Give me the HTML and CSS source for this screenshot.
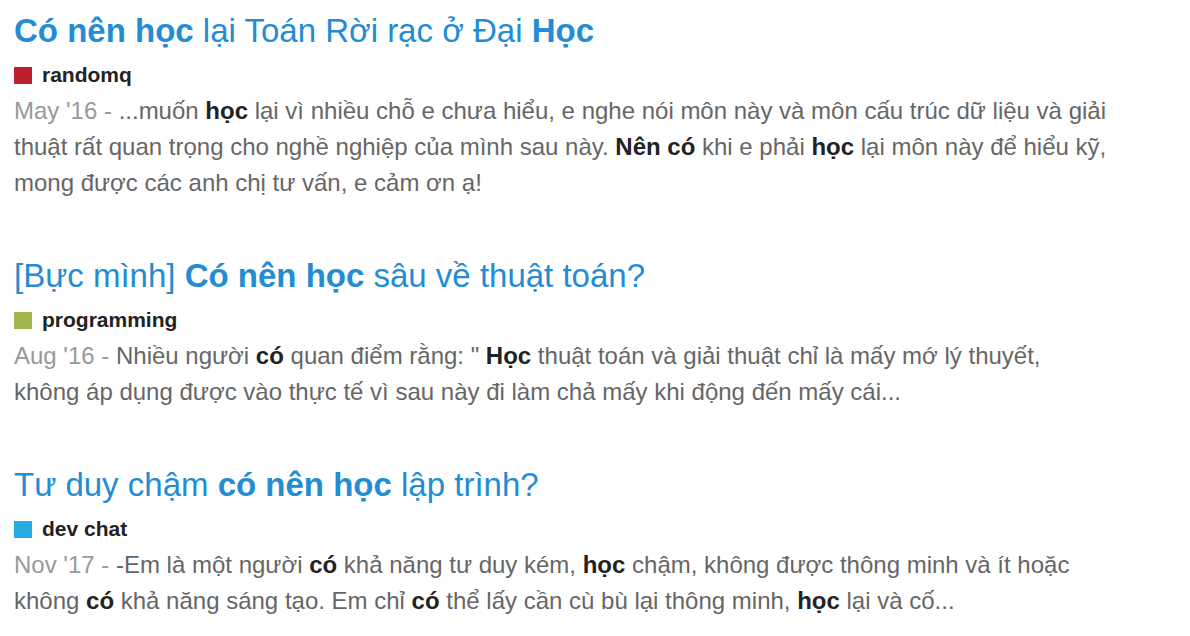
FILE: index.html
```html
<!DOCTYPE html>
<html lang="vi">
<head>
  <meta charset="UTF-8" />
  <title>Kết quả tìm kiếm</title>
  <link rel="stylesheet" href="styles.css">
</head>
<body>
  <main class="ket-qua">
    <div class="muc">
      <a class="tieu-de" href="#"><b>Có nên học</b> lại Toán Rời rạc ở Đại <b>Học</b></a>
      <div class="chuyen-muc"><span class="o-mau do"></span>randomq</div>
      <p class="trich-dan"><span class="ngay">May '16 - </span>...muốn <b>học</b> lại vì nhiều chỗ e chưa hiểu, e nghe nói môn này và môn cấu trúc dữ liệu và giải<br>thuật rất quan trọng cho nghề nghiệp của mình sau này. <b>Nên có</b> khi e phải <b>học</b> lại môn này để hiểu kỹ,<br>mong được các anh chị tư vấn, e cảm ơn ạ!</p>
    </div>

    <div class="muc">
      <a class="tieu-de" href="#">[Bực mình] <b>Có nên học</b> sâu về thuật toán?</a>
      <div class="chuyen-muc"><span class="o-mau xanh-la"></span>programming</div>
      <p class="trich-dan"><span class="ngay">Aug '16 - </span>Nhiều người <b>có</b> quan điểm rằng: " <b>Học</b> thuật toán và giải thuật chỉ là mấy mớ lý thuyết,<br>không áp dụng được vào thực tế vì sau này đi làm chả mấy khi động đến mấy cái...</p>
    </div>

    <div class="muc">
      <a class="tieu-de" href="#">Tư duy chậm <b>có nên học</b> lập trình?</a>
      <div class="chuyen-muc"><span class="o-mau xanh-duong"></span>dev chat</div>
      <p class="trich-dan"><span class="ngay">Nov '17 - </span>-Em là một người <b>có</b> khả năng tư duy kém, <b>học</b> chậm, không được thông minh và ít hoặc<br>không <b>có</b> khả năng sáng tạo. Em chỉ <b>có</b> thể lấy cần cù bù lại thông minh, <b>học</b> lại và cố...</p>
    </div>
  </main>
</body>
</html>
```

FILE: styles.css
```css
body {
  font-family: "Liberation Sans", Arial, sans-serif;
  background: #fff;
  margin: 0;
  padding: 0;
}
.ket-qua {
  padding: 11px 14px 0;
}
.muc {
  margin-bottom: 55px;
}
.tieu-de {
  display: block;
  color: #238cd2;
  font-size: 33px;
  line-height: 40px;
  text-decoration: none;
}
.tieu-de b {
  font-weight: bold;
}
.chuyen-muc {
  display: flex;
  align-items: center;
  gap: 10px;
  margin-top: 6px;
  font-size: 21px;
  font-weight: bold;
  line-height: 36px;
  color: #222;
}
.o-mau {
  width: 18px;
  height: 17px;
}
.do { background: #bf1e2e; }
.xanh-la { background: #a1b64d; }
.xanh-duong { background: #25aae2; }
.trich-dan {
  margin: 0;
  font-size: 24px;
  line-height: 36px;
  color: #666;
  white-space: nowrap;
}
.trich-dan b {
  color: #222;
}
.ngay {
  color: #999;
}
```
